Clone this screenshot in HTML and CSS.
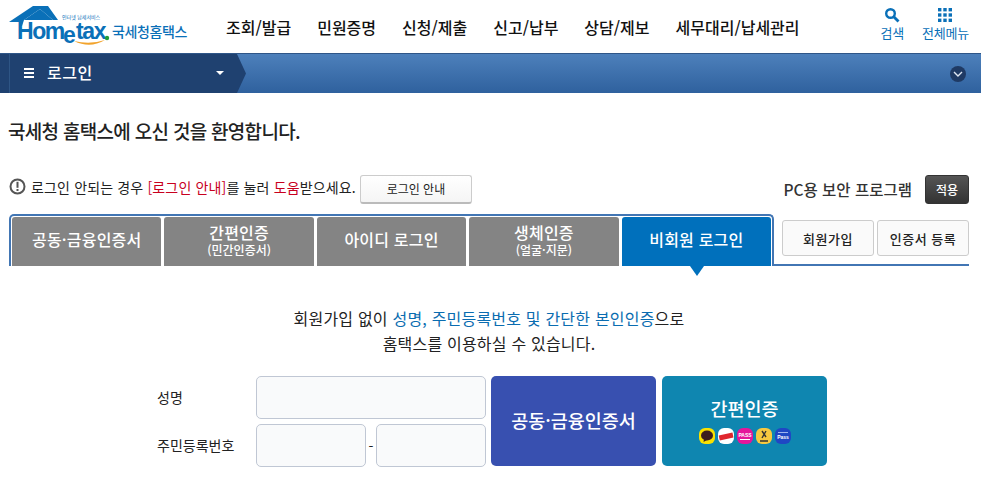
FILE: index.html
```html
<!DOCTYPE html>
<html lang="ko">
  <head>
    <meta charset="UTF-8" />
    <title>국세청 홈택스 - 로그인</title>
    <link rel="stylesheet" href="styles.css">
  </head>
  <body>
    <header class="top">
      <a class="logo">
        <svg width="190" height="50" viewBox="0 0 190 50">
          <path d="M9 22 L33 6 H48 L58 20 H53 L40 9 L24 20 L22 26 H19 V22 Z" fill="#0a70b8" />
          <path d="M24 20 L40 9 L53 20 Z" fill="#0a70b8" />
          <path d="M74 41 Q90 49 105 40 Q90 45 74 41 Z" fill="#f2a32c" />
          <text x="62" y="19" class="logo-small">인터넷 납세서비스</text>
          <text x="17" y="39" class="logo-word">Hom</text>
          <text x="63" y="43" class="logo-word">e</text>
          <text x="76" y="39" class="logo-word">tax</text>
          <circle cx="107" cy="38" r="2.2" fill="#1f9d3a" />
          <text x="112" y="37" class="logo-name">국세청홈택스</text>
        </svg>
      </a>
      <nav class="gnb">
        <a>조회/발급</a>
        <a>민원증명</a>
        <a>신청/제출</a>
        <a>신고/납부</a>
        <a>상담/제보</a>
        <a>세무대리/납세관리</a>
      </nav>
      <div class="util">
        <a class="util-item">
          <svg width="16" height="16" viewBox="0 0 16 16">
            <circle cx="6.5" cy="6.5" r="4.3" fill="none" stroke="#0a70b8" stroke-width="2.4" />
            <path d="M10 10 L14.5 14.5" stroke="#0a70b8" stroke-width="2.8" />
          </svg>
          <span>검색</span>
        </a>
        <a class="util-item">
          <svg class="grid-icon" width="14" height="14" viewBox="0 0 14 14" fill="#0a70b8">
            <rect width="3.4" height="3.4" /><rect x="5.3" width="3.4" height="3.4" /><rect x="10.6" width="3.4" height="3.4" />
            <rect y="5.3" width="3.4" height="3.4" /><rect x="5.3" y="5.3" width="3.4" height="3.4" /><rect x="10.6" y="5.3" width="3.4" height="3.4" />
            <rect y="10.6" width="3.4" height="3.4" /><rect x="5.3" y="10.6" width="3.4" height="3.4" /><rect x="10.6" y="10.6" width="3.4" height="3.4" />
          </svg>
          <span>전체메뉴</span>
        </a>
      </div>
    </header>

    <div class="bar">
      <div class="crumb">
        <span class="burger"><i></i><i></i><i></i></span>
        <span class="crumb-title">로그인</span>
        <span class="caret"></span>
      </div>
      <span class="bar-toggle">
        <svg width="10" height="6" viewBox="0 0 10 6"><path d="M1 1 L5 5 L9 1" fill="none" stroke="#dfe7f2" stroke-width="1.4" /></svg>
      </span>
    </div>

    <main class="content">
      <h1>국세청 홈택스에 오신 것을 환영합니다.</h1>

      <div class="notice-row">
        <svg width="17" height="17" viewBox="0 0 17 17">
          <circle cx="8.5" cy="8.5" r="7" fill="none" stroke="#555" stroke-width="2" />
          <rect x="7.5" y="3.8" width="2" height="6" fill="#555" />
          <rect x="7.5" y="11" width="2" height="2" fill="#555" />
        </svg>
        <p>로그인 안되는 경우 <em>[로그인 안내]</em>를 눌러 <em>도움</em>받으세요.</p>
        <button class="guide-btn">로그인 안내</button>
        <span class="secure-label">PC용 보안 프로그램</span>
        <button class="apply-btn">적용</button>
      </div>

      <div class="tab-row">
        <div class="tabs">
          <a class="tab">공동·금융인증서</a>
          <a class="tab">간편인증<small>(민간인증서)</small></a>
          <a class="tab">아이디 로그인</a>
          <a class="tab">생체인증<small>(얼굴·지문)</small></a>
          <a class="tab on">비회원 로그인</a>
        </div>
        <div class="tab-side">
          <button class="side-btn">회원가입</button>
          <button class="side-btn">인증서 등록</button>
        </div>
      </div>

      <p class="intro">
        회원가입 없이 <b>성명, 주민등록번호 및 간단한 본인인증</b>으로<br />
        홈택스를 이용하실 수 있습니다.
      </p>

      <div class="form">
        <div class="fields">
          <label>성명</label>
          <input class="field" type="text" />
          <label>주민등록번호</label>
          <div class="rrn">
            <input class="field" type="text" />
            <span>-</span>
            <input class="field" type="text" />
          </div>
        </div>
        <button class="auth-btn cert">공동·금융인증서</button>
        <button class="auth-btn simple">
          간편인증
          <span class="apps">
            <svg width="16" height="16" viewBox="0 0 16 16"><rect width="16" height="16" rx="6" fill="#fae100" /><ellipse cx="8" cy="7.5" rx="6" ry="5" fill="#3c1e1e" /><path d="M5 11 L4.5 14 L8 12 Z" fill="#3c1e1e" /></svg>
            <svg width="16" height="16" viewBox="0 0 16 16"><rect width="16" height="16" rx="6" fill="#fff" /><rect x="1" y="6" width="14" height="5" fill="#e0262e" transform="rotate(-12 8 8)" /></svg>
            <svg width="16" height="16" viewBox="0 0 16 16"><rect width="16" height="16" rx="6" fill="#e5159b" /><text x="8" y="9" class="app-text">PASS</text><rect x="3" y="11" width="10" height="1" fill="#fff" /></svg>
            <svg width="16" height="16" viewBox="0 0 16 16"><rect width="16" height="16" rx="6" fill="#f7c83f" /><path d="M6 3 L10 9 M10 3 L6 10 M4 13 H12" stroke="#333" stroke-width="1.4" /></svg>
            <svg width="16" height="16" viewBox="0 0 16 16"><rect width="16" height="16" rx="6" fill="#1f47c4" /><rect x="3" y="4" width="10" height="1" fill="#9db4ee" /><text x="8" y="11" class="app-text">Pass</text></svg>
          </span>
        </button>
      </div>
    </main>
  </body>
</html>
```

FILE: styles.css
```css
* {
  box-sizing: border-box;
}

html,
body {
  height: 100%;
  overflow: hidden;
}

body {
  margin: 0;
  font-family: "Noto Sans CJK KR", "Noto Sans", sans-serif;
  background: white;
  color: #222;
}

button,
input {
  font-family: inherit;
}

/* header */
.top {
  display: flex;
  align-items: center;
  height: 53px;
}

.logo {
  display: block;
  width: 226px;
  height: 53px;
}

.logo-small {
  font-size: 5px;
  fill: #0a70b8;
}

.logo-word {
  font-family: "Liberation Sans", sans-serif;
  font-size: 23px;
  font-weight: bold;
  letter-spacing: -1.4px;
  fill: #0a70b8;
}

.logo-name {
  font-size: 14px;
  font-weight: 500;
  fill: #0a70b8;
  letter-spacing: -0.4px;
}

.gnb {
  display: flex;
  gap: 26px;
  font-size: 16px;
  font-weight: 500;
  color: #111;
}

.util {
  display: flex;
  gap: 18px;
  margin-left: auto;
  margin-bottom: 5px;
  padding-right: 12px;
}

.util-item {
  display: flex;
  flex-direction: column;
  align-items: center;
  gap: 1px;
  font-size: 13px;
  line-height: 17px;
  letter-spacing: -0.2px;
  color: #0a70b8;
}

.util-item svg {
  height: 16px;
}

/* location bar */
.bar {
  display: flex;
  align-items: center;
  justify-content: space-between;
  height: 40px;
  background: linear-gradient(#4d80bb, #2f619e);
  border-top: 1px solid #2f5688;
  padding-right: 15px;
}

.crumb {
  display: flex;
  align-items: center;
  width: 246px;
  height: 39px;
  padding-left: 24px;
  background: linear-gradient(#2e5585, #2e5585) 9px 0 / 1px 100% no-repeat, #1f4170;
  clip-path: polygon(0 0, 237px 0, 246px 50%, 237px 100%, 0 100%);
  color: white;
}

.burger {
  display: flex;
  flex-direction: column;
  gap: 2px;
  width: 10px;
  margin-bottom: 2px;
}

.burger i {
  display: block;
  height: 2px;
  background: white;
}

.crumb-title {
  margin-left: 13px;
  padding-bottom: 3px;
  font-size: 16px;
  font-weight: 500;
  letter-spacing: 0.5px;
}

.caret {
  margin-left: 123px;
  margin-bottom: 1px;
  border-top: 4px solid white;
  border-left: 4px solid transparent;
  border-right: 4px solid transparent;
}

.bar-toggle {
  display: flex;
  align-items: center;
  justify-content: center;
  width: 16px;
  height: 16px;
  border-radius: 50%;
  background: #1f3a64;
}

/* content */
.content {
  padding: 0 12px 0 9px;
}

h1 {
  margin: 25px 0 0 -1px;
  font-size: 19px;
  font-weight: 500;
  line-height: 26px;
  letter-spacing: -0.7px;
  color: #222;
}

.notice-row {
  display: flex;
  align-items: center;
  height: 30px;
  margin-top: 30px;
  font-size: 14px;
}

.notice-row svg {
  margin: 0 5px 5px 0;
}

.notice-row p {
  margin: 0 0 5px;
  letter-spacing: 0.15px;
}

.notice-row em {
  font-style: normal;
  color: #c8001e;
}

.guide-btn {
  width: 112px;
  height: 29px;
  margin-left: 4px;
  font-size: 12px;
  color: #222;
  background: linear-gradient(#fff, #f5f5f5);
  border: 1px solid #ccc;
  border-bottom: 2px solid #bbb;
  border-radius: 3px;
}

.secure-label {
  margin-left: auto;
  font-size: 15.5px;
  font-weight: 500;
  color: #333;
}

.apply-btn {
  width: 44px;
  height: 29px;
  margin-left: 13px;
  font-size: 12px;
  font-weight: 500;
  color: white;
  background: linear-gradient(#555, #333);
  border: 1px solid #333;
  border-radius: 3px;
}

.tab-row {
  display: flex;
  align-items: flex-end;
  margin-top: 10px;
}

.tabs {
  display: flex;
  gap: 3px;
  width: 765px;
  height: 52px;
  padding: 1px 1px 0;
  border: 2px solid #4276b4;
  border-bottom: 0;
  border-radius: 5px 5px 0 0;
}

.tab {
  position: relative;
  display: flex;
  flex-direction: column;
  align-items: center;
  justify-content: center;
  flex: 1;
  padding-bottom: 4px;
  font-size: 16px;
  font-weight: 500;
  line-height: 19px;
  letter-spacing: 0.2px;
  color: white;
  background: #848484;
  border-radius: 3px 3px 0 0;
}

.tab small {
  font-size: 12px;
  line-height: 15px;
  letter-spacing: 0;
}

.tab.on {
  background: #0070bc;
}

/* little pointer under the active tab */
.tab.on::after {
  content: "";
  position: absolute;
  left: 68px;
  top: 100%;
  border-top: 10px solid #0070bc;
  border-left: 7px solid transparent;
  border-right: 7px solid transparent;
}

.tab-side {
  display: flex;
  gap: 3px;
  flex: 1;
  height: 46px;
  padding: 0 0 0 8px;
  border-bottom: 2px solid #4276b4;
}

.side-btn {
  width: 92px;
  height: 36px;
  padding: 0;
  font-size: 13px;
  font-weight: 500;
  letter-spacing: 0.5px;
  color: #222;
  background: #fafafa;
  border: 1px solid #ccc;
  border-radius: 3px;
}

.intro {
  margin: 40px 0 0;
  font-size: 16px;
  line-height: 25px;
  letter-spacing: 0.2px;
  text-align: center;
  color: #222;
}

.intro b {
  font-weight: 400;
  color: #0a6cb0;
}

.form {
  display: flex;
  gap: 5px;
  margin: 20px 0 0 148px;
}

.fields {
  display: grid;
  grid-template-columns: 99px 230px;
  grid-template-rows: 43px 43px;
  row-gap: 5px;
  align-items: center;
  font-size: 14px;
}

.fields label {
  margin-bottom: 2px;
}

.field {
  width: 100%;
  height: 100%;
  background: #f9fafb;
  border: 1px solid #c0c7d4;
  border-radius: 5px;
}

.rrn {
  display: grid;
  grid-template-columns: 110px 1fr 110px;
  align-items: center;
  height: 100%;
  text-align: center;
}

.auth-btn {
  width: 165px;
  height: 90px;
  padding: 0 0 2px;
  font-size: 18.5px;
  font-weight: 500;
  line-height: 24px;
  color: white;
  border: 0;
  border-radius: 5px;
}

.auth-btn.cert {
  background: #3850b0;
}

.auth-btn.simple {
  margin-left: 1px;
  background: #0f86b0;
}

.apps {
  display: flex;
  justify-content: center;
  gap: 3px;
  margin-top: 8px;
}

.app-text {
  font-family: "Liberation Sans", sans-serif;
  font-size: 5px;
  font-weight: bold;
  text-anchor: middle;
  fill: white;
}
```
